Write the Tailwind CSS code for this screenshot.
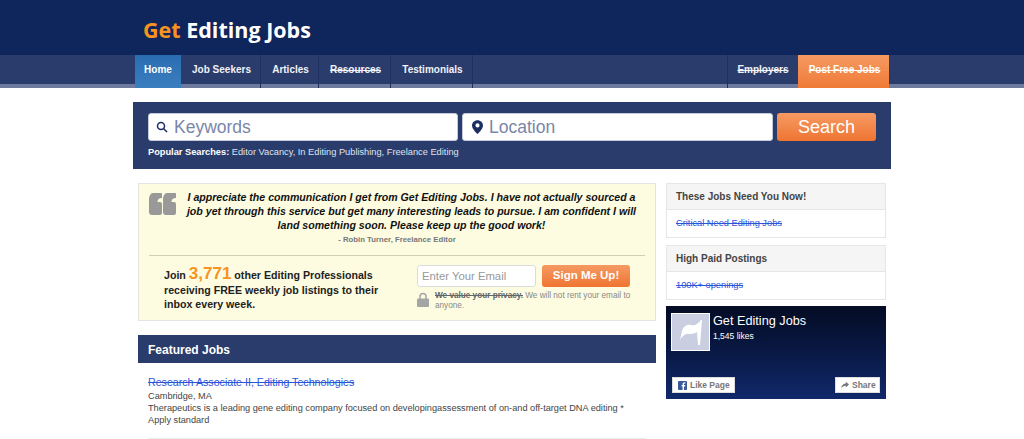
<!DOCTYPE html>
<html>
<head>
    <meta charset="UTF-8">
    <meta name="viewport" content="width=device-width, initial-scale=1.0">
    <title>Get Editing Jobs</title>
    <script src="https://cdn.jsdelivr.net/npm/@tailwindcss/browser@4"></script>
</head>
<body class="bg-white h-[439px] overflow-hidden font-['Liberation_Sans',Arial,sans-serif]">
    <!-- header -->
    <header class="bg-[#0f265c] h-[55px] pl-[143px] pt-[14px]">
        <div class="text-[21.5px] leading-[32px] font-bold font-['Open_Sans',sans-serif] text-white"><span class="text-[#f7931e]">Get</span> Editing Jobs</div>
    </header>

    <!-- nav -->
    <nav class="bg-[#2a3c6c] h-[33px] border-b-[4px] border-[#6d7a9e] pl-[135px] pr-[135px] flex justify-between text-[10px] font-bold text-[#f0f2f7]">
        <div class="flex h-[33px]">
            <a class="w-[46px] flex items-center justify-center pb-[4px] bg-gradient-to-b from-[#2a6cb0] to-[#3a7fc0] text-white">Home</a>
            <a class="w-[80px] flex items-center justify-center pb-[4px] pl-[2px] border-r border-[#1f3060]">Job Seekers</a>
            <a class="w-[58px] flex items-center justify-center pb-[4px] pl-[2px] border-r border-[#1f3060]">Articles</a>
            <a class="w-[72px] flex items-center justify-center pb-[4px] pl-[2px] border-r border-[#1f3060] line-through">Resources</a>
            <a class="w-[82px] flex items-center justify-center pb-[4px] pl-[2px] border-r border-[#1f3060]">Testimonials</a>
        </div>
        <div class="flex h-[33px]">
            <a class="w-[71px] flex items-center justify-center pb-[4px] border-l border-[#1f3060] line-through">Employers</a>
            <a class="w-[91px] flex items-center justify-center pb-[4px] pl-[2px] bg-gradient-to-b from-[#f59a62] to-[#ef7a35] text-white line-through">Post Free Jobs</a>
        </div>
    </nav>

    <!-- search -->
    <section class="ml-[133px] mt-[14px] w-[758px] h-[67px] bg-[#2a3c6c] px-[15px] pt-[11px]">
        <div class="flex gap-[4px] h-[28px]">
            <div class="w-[310px] bg-white rounded-[3px] border border-[#c5cad8] flex items-center pl-[7px] gap-[6px]">
                <svg class="w-[12px] h-[12px]" viewBox="0 0 24 24" fill="none" stroke="#1c2f63" stroke-width="3"><circle cx="10" cy="10" r="7"/><path d="M15 15l7 7"/></svg>
                <span class="text-[17.5px] text-[#7a86a8]">Keywords</span>
            </div>
            <div class="w-[311px] bg-white rounded-[3px] border border-[#c5cad8] flex items-center pl-[9px] gap-[6px]">
                <svg class="w-[11px] h-[14px]" viewBox="0 0 24 30" fill="#1c2f63"><path fill-rule="evenodd" d="M12 0C5.4 0 0 5.2 0 11.6 0 20 12 30 12 30s12-10 12-18.4C24 5.2 18.600 0 12 0zm0 16a4.500 4.500 0 110-9 4.500 4.500 0 010 9z"/></svg>
                <span class="text-[17.5px] text-[#7a86a8]">Location</span>
            </div>
            <button class="w-[99px] rounded-[3px] bg-gradient-to-b from-[#f59a62] to-[#ef7430] text-white text-[18px]">Search</button>
        </div>
        <p class="mt-[4px] text-[9.25px] leading-[14px] text-[#dfe3ee]"><b class="text-white">Popular Searches:</b> Editor Vacancy, In Editing Publishing, Freelance Editing</p>
    </section>

    <div class="ml-[138px] mt-[14px] flex gap-[10px] items-start">
        <!-- left column -->
        <main class="w-[518px]">
            <div class="h-[138px] bg-[#fdfce0] border border-[#e4e4e0] px-[10px] pt-[6px]">
                <div class="h-[65px]">
                    <div class="flex">
                        <svg class="w-[27px] h-[22px] mt-[3px] shrink-0" viewBox="0 0 27 22" fill="#999"><path d="M4 0h8c.6 0 1 .4 1 1v4c-3 0-4.500 1.200-4.500 4H11c1.200 0 2 .8 2 2v9c0 1.200-.8 2-2 2H3c-1.800 0-3-1.200-3-3V7C0 3 1.500 0 4 0zM18 0h8c.6 0 1 .4 1 1v4c-3 0-4.500 1.200-4.500 4H25c1.200 0 2 .8 2 2v9c0 1.200-.8 2-2 2h-8c-1.800 0-3-1.200-3-3V7c0-4 1.500-7 4-7z"/></svg>
                        <p class="flex-1 pl-[8px] pr-[6px] text-center text-[10.6px] leading-[14px] font-bold italic text-[#111]">I appreciate the communication I get from Get Editing Jobs. I have not actually sourced a job yet through this service but get many interesting leads to pursue. I am confident I will land something soon. Please keep up the good work!</p>
                    </div>
                    <p class="mt-[2px] text-center text-[7.75px] leading-[12px] font-bold text-[#777]">- Robin Turner, Freelance Editor</p>
                </div>
                <div class="border-t border-[#cfcfb8] flex pt-[9px]">
                    <p class="w-[253px] ml-[15px] mt-[2px] pr-[30px] text-[10.65px] leading-[14.500px] font-bold text-[#222]">Join <span class="text-[17px] leading-[14px] text-[#f7931e]">3,771</span> other Editing Professionals receiving FREE weekly job listings to their inbox every week.</p>
                    <div class="w-[215px]">
                        <div class="flex gap-[6px] h-[22px]">
                            <div class="w-[119px] bg-white border border-[#dcdcdc] rounded-[3px] flex items-center pl-[4px] text-[11.3px] text-[#999]">Enter Your Email</div>
                            <button class="w-[88px] rounded-[3px] bg-gradient-to-b from-[#f59a62] to-[#ef7430] text-white text-[11.5px] font-bold">Sign Me Up!</button>
                        </div>
                        <div class="flex mt-[3px] gap-[6px]">
                            <svg class="w-[12px] h-[15px] mt-[2px] shrink-0" viewBox="0 0 12 15"><path d="M3 7V4.500a3 3 0 016 0V7" fill="none" stroke="#a5a5a5" stroke-width="1.500"/><rect y="6.500" width="12" height="8.500" rx="1" fill="#a5a5a5"/></svg>
                            <p class="text-[8.2px] leading-[9.500px] pt-[1px] text-[#888]"><b class="line-through text-[#666]">We value your privacy.</b> We will not rent your email to anyone.</p>
                        </div>
                    </div>
                </div>
            </div>

            <div class="mt-[14px] h-[28px] bg-[#2a3c6c] flex items-center pl-[10px] pt-[1px] text-[12px] font-bold text-white">Featured Jobs</div>
            <div class="mx-[10px] pt-[13px] pb-[12px] border-b border-[#eeeeee] text-[9.2px] leading-[12px] text-[#444]">
                <a class="block text-[10.65px] leading-[13px] mb-[1px] text-[#2a55d9] line-through">Research Associate II, Editing Technologies</a>
                <p>Cambridge, MA</p>
                <p>Therapeutics is a leading gene editing company focused on developingassessment of on-and off-target DNA editing * Apply standard</p>
            </div>
        </main>

        <!-- right column -->
        <aside class="w-[220px] flex flex-col">
            <div class="h-[55px] border border-[#e6e6e6]">
                <div class="h-[26px] bg-[#f5f5f5] border-b border-[#e6e6e6] flex items-center pl-[9px] text-[10px] font-bold text-[#444]">These Jobs Need You Now!</div>
                <div class="pl-[9px] pt-[7px] text-[9.25px] leading-[12px] text-[#2a55d9] line-through">Critical Need Editing Jobs</div>
            </div>
            <div class="h-[55px] mt-[7px] border border-[#e6e6e6]">
                <div class="h-[26px] bg-[#f5f5f5] border-b border-[#e6e6e6] flex items-center pl-[9px] text-[10px] font-bold text-[#444]">High Paid Postings</div>
                <div class="pl-[9px] pt-[7px] text-[9.25px] leading-[12px] text-[#2a55d9] line-through">100K+ openings</div>
            </div>
            <div class="h-[93px] mt-[6px] relative bg-gradient-to-b from-[#040b24] to-[#11296b] pl-[5px] pt-[7px] flex gap-[3px]">
                <div class="w-[39px] h-[38px] bg-[#c9cfe0] border border-white flex items-center justify-center shrink-0">
                    <svg class="w-[22px] h-[26px]" viewBox="0 0 22 26" fill="white"><path d="M0 21l2-9c1-4 5-7 9-6 4 1 7-1 10-5h1l-2 25h-2l-1-13c-3 2-6 2-9 2-3 0-5 1-8 6z"/></svg>
                </div>
                <div class="text-white pt-[1px]">
                    <p class="text-[12.7px] leading-[15px]">Get Editing Jobs</p>
                    <p class="text-[8.5px] leading-[12px] mt-[1px]">1,545 likes</p>
                </div>
                <div class="absolute left-[6px] bottom-[6px] w-[63px] h-[16px] bg-white border border-[#ddd] flex items-center pl-[5px] gap-[3px] text-[8.5px] font-bold text-[#777]">
                    <svg class="w-[9px] h-[9px]" viewBox="0 0 9 9"><rect width="9" height="9" rx="1" fill="#3b5998"/><path d="M6 9V5.500h1.100L7.300 4H6V3.200c0-.4.2-.7.700-.7h.6V1.200H6.500C5.300 1.200 4.600 1.900 4.600 3v1h-1v1.500h1V9z" fill="#fff"/></svg>
                    Like Page
                </div>
                <div class="absolute right-[6px] bottom-[6px] w-[45px] h-[16px] bg-white border border-[#ddd] flex items-center pl-[5px] gap-[3px] text-[8.5px] font-bold text-[#777]">
                    <svg class="w-[8px] h-[8px]" viewBox="0 0 10 10" fill="#777"><path d="M6 1l4 3.500L6 8V6C3.500 6 1.500 7 0 9.500 .5 5.500 3 3 6 3z"/></svg>
                    Share
                </div>
            </div>
        </aside>
    </div>
</body>
</html>
